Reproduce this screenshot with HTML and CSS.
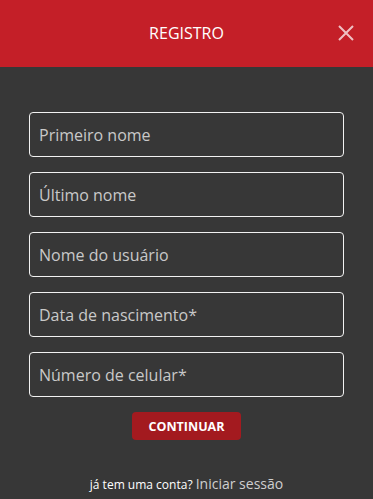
FILE: index.html
```html
<!DOCTYPE html>
<html lang="pt">
<head>
<meta charset="utf-8">
<title>Registro</title>
<link rel="stylesheet" href="styles.css">
</head>
<body>
<div class="modal">
  <header class="header">
    <h1 class="title">REGISTRO</h1>
    <button class="close" type="button" aria-label="Fechar">
      <svg width="16" height="16" viewBox="0 0 16 16"><path d="M1 1 L15 15 M15 1 L1 15" stroke="currentColor" stroke-width="2" fill="none"/></svg>
    </button>
  </header>
  <form class="form">
    <input class="field" type="text" placeholder="Primeiro nome">
    <input class="field" type="text" placeholder="Último nome">
    <input class="field" type="text" placeholder="Nome do usuário">
    <input class="field" type="text" placeholder="Data de nascimento*">
    <input class="field" type="text" placeholder="Número de celular*">
    <button class="submit" type="button">CONTINUAR</button>
    <p class="login">já tem uma conta? <a class="login-link" href="#">Iniciar sessão</a></p>
  </form>
</div>
</body>
</html>
```
FILE: styles.css
```css
* { box-sizing: border-box; }
html, body { margin: 0; padding: 0; }
body {
  background: #373737;
  font-family: "Open Sans", "Noto Sans", sans-serif;
  width: 373px;
  height: 499px;
  overflow: hidden;
}
.modal { display: flex; flex-direction: column; }
.header {
  position: relative;
  height: 67px;
  background: #c41f28;
  display: flex;
  align-items: center;
  justify-content: center;
  padding-bottom: 1px;
}
.title {
  margin: 0;
  color: #ffffff;
  font-size: 16px;
  font-weight: 400;
  letter-spacing: 0;
}
.close {
  position: absolute;
  right: 19px;
  top: 25px;
  width: 16px;
  height: 16px;
  padding: 0;
  border: 0;
  background: none;
  color: rgba(255, 255, 255, 0.72);
  display: flex;
}
.form {
  display: flex;
  flex-direction: column;
  align-items: center;
  padding: 45px 29px 0;
  gap: 15px;
}
.field {
  width: 100%;
  height: 45px;
  border: 1px solid #f2f2f2;
  border-radius: 4px;
  background: transparent;
  padding: 0 9px;
  font-family: inherit;
  font-size: 16px;
  color: #d0d0d0;
  outline: none;
}
.field::placeholder { color: #c9c9c9; opacity: 1; }
.submit {
  width: 109px;
  height: 28px;
  border: 0;
  border-radius: 4px;
  background: #a31a1f;
  color: #ffffff;
  font-family: inherit;
  font-weight: 700;
  font-size: 12.5px;
  padding: 0;
}
.login {
  margin: 19px 0 0;
  color: #ffffff;
  font-size: 12px;
}
.login-link {
  color: #cfcfcf;
  font-size: 14px;
  text-decoration: none;
}
```
